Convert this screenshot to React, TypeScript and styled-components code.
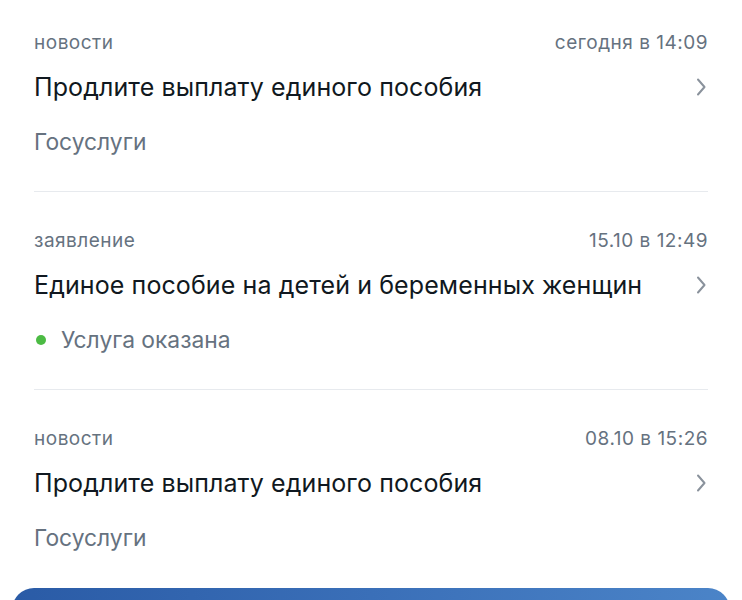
import React from 'react';
import styled, { createGlobalStyle } from 'styled-components';

const GlobalStyle = createGlobalStyle`
  html, body {
    margin: 0;
    padding: 0;
    background: #ffffff;
    font-family: Inter, Roboto, "Noto Sans", sans-serif;
    -webkit-font-smoothing: antialiased;
  }
`;

const Page = styled.div`
  width: 742px;
  height: 600px;
  overflow: hidden;
  background: #ffffff;
`;

const List = styled.div`
  display: flex;
  flex-direction: column;
  padding: 0 34px;
`;

const Item = styled.div<{ $last?: boolean }>`
  display: flex;
  flex-direction: column;
  padding: 37px 0 ${(p) => (p.$last ? '0' : '35px')};
  border-bottom: ${(p) => (p.$last ? 'none' : '1px solid #e7eaee')};

  &:first-child {
    padding-top: 31px;
  }
`;

const Meta = styled.div`
  display: flex;
  justify-content: space-between;
  align-items: center;
  font-size: 19px;
  line-height: 24px;
  color: #66727f;
  letter-spacing: 0.5px;
`;

const TitleRow = styled.div`
  display: flex;
  justify-content: space-between;
  align-items: center;
  margin-top: 16px;
  height: 32px;
`;

const Title = styled.div`
  font-size: 25px;
  line-height: 32px;
  letter-spacing: 0.1px;
  color: #101820;
`;

const Sub = styled.div`
  display: flex;
  align-items: center;
  gap: 15px;
  margin-top: 25px;
  font-size: 22.8px;
  line-height: 28px;
  color: #66727f;
`;

const Dot = styled.span`
  width: 10px;
  height: 10px;
  border-radius: 50%;
  background: #4cbb44;
  margin-left: 2px;
`;

const Chevron = () => (
  <svg width="12" height="20" viewBox="0 0 12 20" fill="none">
    <path
      d="M3 2.5 L9.5 10 L3 17.5"
      stroke="#8a929c"
      strokeWidth="2"
      strokeLinecap="round"
      strokeLinejoin="round"
    />
  </svg>
);

const ChevronBox = styled.div`
  display: flex;
  align-items: center;
  margin-right: 1px;
`;

const Bar = styled.div`
  margin: 36px 12px 0;
  height: 60px;
  border-radius: 22px 22px 0 0;
  background: linear-gradient(90deg, #2a5ba6 0%, #3a6fb8 50%, #4b84c8 100%);
`;

interface Entry {
  kind: string;
  time: string;
  title: string;
  sub: string;
  done?: boolean;
}

const entries: Entry[] = [
  {
    kind: 'новости',
    time: 'сегодня в 14:09',
    title: 'Продлите выплату единого пособия',
    sub: 'Госуслуги',
  },
  {
    kind: 'заявление',
    time: '15.10 в 12:49',
    title: 'Единое пособие на детей и беременных женщин',
    sub: 'Услуга оказана',
    done: true,
  },
  {
    kind: 'новости',
    time: '08.10 в 15:26',
    title: 'Продлите выплату единого пособия',
    sub: 'Госуслуги',
  },
];

export default function App() {
  return (
    <Page>
      <GlobalStyle />
      <List>
        {entries.map((e, i) => (
          <Item key={i} $last={i === entries.length - 1}>
            <Meta>
              <span>{e.kind}</span>
              <span>{e.time}</span>
            </Meta>
            <TitleRow>
              <Title>{e.title}</Title>
              <ChevronBox>
                <Chevron />
              </ChevronBox>
            </TitleRow>
            <Sub>
              {e.done && <Dot />}
              <span>{e.sub}</span>
            </Sub>
          </Item>
        ))}
      </List>
      <Bar />
    </Page>
  );
}
